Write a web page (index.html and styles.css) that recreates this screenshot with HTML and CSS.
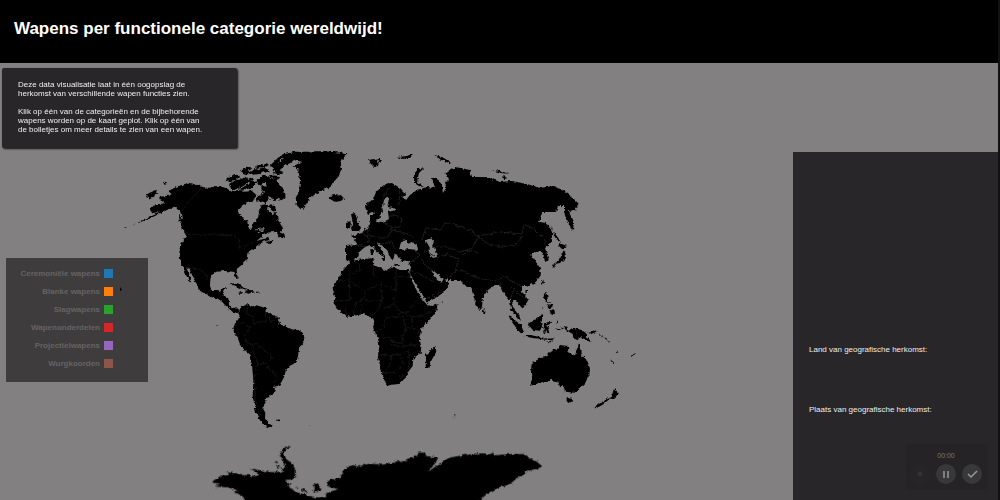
FILE: index.html
```html
<!DOCTYPE html>
<html lang="nl">
<head>
<meta charset="utf-8">
<title>Wapens per functionele categorie wereldwijd!</title>
<link rel="stylesheet" href="styles.css">
</head>
<body>
<header class="header"><h1>Wapens per functionele categorie wereldwijd!</h1></header>
<main class="main">
  <svg class="map" viewBox="0 63 793 437" role="img" aria-label="Wereldkaart">
    <defs>
      <filter id="coast" x="0" y="0" width="100%" height="100%">
        <feTurbulence type="fractalNoise" baseFrequency=".3" numOctaves="2" seed="4"/>
        <feDisplacementMap in="SourceGraphic" scale="4" xChannelSelector="R" yChannelSelector="G"/>
      </filter>
    </defs>
    <g filter="url(#coast)">
    <!-- North America -->
    <g transform="translate(110 145) scale(.33333)">
      <path d="M120 190L140 178 165 175 150 165 148 155 175 152 185 148 175 138 200 125 235 113 262 120 280 127 300 128 325 122 350 130 365 140 385 138 405 140 425 138 440 150 430 165 410 172 395 182 383 195 388 210 402 222 412 230 415 250 424 253 432 232 445 215 447 195 455 180 470 178 475 195 485 208 500 200 503 225 515 238 520 250 505 260 480 262 460 270 440 288 460 282 475 275 478 285 450 295 430 312 412 325 410 345 395 360 380 372 383 400 376 402 370 380 345 378 315 380 302 395 300 420 308 440 325 443 335 430 348 425 342 440 335 455 355 460 358 482 370 494 387 497 384 504 367 500 350 480 325 462 300 455 270 437 262 420 250 400 238 370 229 368 238 390 246 415 238 410 228 390 222 370 212 350 208 325 215 295 232 272 222 258 213 240 218 215 213 198 200 190 185 188 160 200 130 215 100 228 65 242 100 225 130 208 150 198 130 205Z"/>
      <path d="M107 153l10-9 24-10-3 9 8 3-15 7-12 11-3-8zM157 113l8-3 7 3-7 3zM40 248l12-2-6 3zM20 251l8-1zM207 210l6 4 2 12-6 4zM213 232l5 5-4 8zM220 258l16 8 0 8-8-3zM348 105l12-11 20-8 10 8-12 10-18 5-13 2zM357 120l20-15 18-2 10-8 12 8-8 12 11 7-18 14-20-5-15 5zM405 110l15-12 12 2-5 11 12-5 6 5-15 15-8 6-13-6zM392 78l15-10 17 2-8 9 13 5-18 4-10-3zM417 85l18-14 12 4 12-7 16 4 4 10-20-3-10 8-18 2zM435 65l17-9 6 5 12-6 10 4-20 8-20 5zM480 62L500 42 520 28 555 20 600 20 580 32 560 38 540 55 520 62 512 75 495 80 485 70zM487 83l22-7 12 6-17 6zM440 104l18-14 45 2 5 8-28-1-8 11-12 2-7 10-10-5zM460 100l20 2 20-7 5 18 12 14 6 12 4 16-12 11-15-6-4 10-13-13-17-7-13-10 2-20 15 5-3-12-10-14zM438 160l15-12 16 0 11 14-12 13-15-8-14 3zM473 180l22 3 3 14-10 3zM500 266l8-15 4 10 12 10-4 9-12-3zM467 292l20-6 5 3-15 8zM358 420l12-5 13 3 15 8 12 8-10-1-18-7-9-5zM402 437l20-2 8 6-18 4zM438 440l8 0 0 3-8 0zM385 439l9 2-4 2zM390 408l4 2z"/>
      <path d="M548 65L575 50 552 44 575 25 605 19 640 19 715 25 700 38 690 60 693 75 685 95 672 110 665 125 645 132 635 138 612 150 600 160 590 175 583 190 572 193 560 180 557 160 568 135 570 105 565 75ZM660 156l12-5 12 2 8-3 10 10-8 7-15 4-8-2-7-6z"/>
      <path class="line" d="M215 195L275 128M232 269L365 270 385 285 390 310 412 300 435 290M228 368L266 372 286 387 296 405"/>
      <path class="cut" d="M425 130l20-20M440 146l8-18 15 15M390 130l30-17M375 138l15-13M455 84l25 12M505 52l20-17M435 255l28-4-22 15"/>
    </g>
    <!-- South America -->
    <g transform="translate(210 290) scale(.33333)">
      <path d="M0 0L22 0 30 12 45 20 55 45 68 57 82 55 88 60 76 66 62 60 45 45 30 28 0 10ZM84 66L95 50 115 42 122 50 138 46 155 50 168 55 166 65 185 72 205 82 210 95 208 103 225 108 245 118 265 120 278 128 284 142 280 158 267 178 263 205 258 218 240 227 228 240 222 262 208 287 190 290 198 300 192 310 178 314 178 322 165 325 170 332 162 345 160 358 166 368 165 385 172 398 186 408 178 413 160 405 148 388 138 370 134 345 128 320 130 270 126 225 122 195 110 185 92 168 82 140 72 128 70 115 75 100 85 88 90 72ZM85 8l12-2 4 5-14 0zM106 4l12-4 10 2 6 5-20 4zM142 8l8 0-2 3zM198 389l11-1-3 6-6-1zM296 404l6 4-3 0zM19 104l5 2-3 2z"/>
      <path class="line" d="M115 48L108 70 130 80 131 102 150 94 168 94 166 65M78 104L98 98 120 112 105 135 107 155 128 165 138 160 160 178 183 195 183 210M128 162L130 185 143 220 133 265 137 330 150 385M143 222L168 220 183 245 195 248 203 265 190 282M178 77L180 94 205 90"/>
    </g>
    <!-- Europe and Asia -->
    <path d="M346 260L346 246 357 245 355 239 351 236 362 233 367 229 370 224 371 215 375 215 376 221 383 222 389 219 388 212 396 210 393 208 387 207 389 200 387 197 392 186 400 188 407 195 402 197 406 200 410 195 417 190 427 187 435 188 432 178 437 178 442 185 443 193 446 188 445 181 449 180 445 174 455 167 470 170 472 177 487 177 500 182 512 181 527 184 540 188 553 186 563 190 572 197 579 204 575 210 569 211 574 222 573 230 567 222 564 212 564 206 558 206 556 212 542 212 539 222 547 223 552 232 552 242 545 248 549 260 545 262 543 253 537 251 530 255 534 258 536 262 540 268 541 275 535 283 527 286 522 286 522 292 528 300 525 307 522 308 515 300 512 300 513 308 519 315 521 321 517 317 511 309 510 300 505 295 499 285 495 285 488 290 483 297 482 307 479 310 475 302 471 287 467 287 460 280 448 280 442 278 435 272 431 270 437 280 442 282 444 278 449 285 443 293 435 298 427 303 424 297 410 275 411 261 402 262 398 255 395 254 392 261 387 250 378 242 377 243 383 252 385 257 380 255 373 247 370 245 365 247 358 253 357 258 352 261Z"/>
    <path d="M365 207L367 203 373 200 376 192 385 184 392 183 400 188 392 194 387 197 382 205 383 212 378 219 375 220 373 212 368 214ZM351 227L354 221 358 222 358 228 352 230ZM351 214L355 213 357 219 361 228 359 231 351 231 355 227 353 223ZM346 224L349 221 351 223 350 227 346 228ZM330 196L335 195 342 196 342 199 336 202 330 199ZM368 160L374 159 379 162 378 166 374 167 371 164ZM376 159l6 0-2 3zM397 157l10-1 5-2-1 3-8 2zM434 155L442 157 452 163 449 163 440 159ZM414 183L414 174 418 169 424 168 419 173 417 182 424 187 419 186ZM492 170l9 1 8 3-8-1zM502 176l6 2-4 1zM552 182l3 1zM549 224L558 238 561 243 557 240ZM559 243L567 246 562 249 559 246ZM564 250L565 258 560 263 555 264 554 268 552 265 558 261ZM382 254l3 3 0 3-2-3zM380 258l5 0 0 3zM370 250l3-1 1 6-3 0zM393 264l7 0-1 2zM408 263l3-1-1 3z"/>
    <path class="sea" d="M399 249L402 241 407 240 408 244 414 242 418 248 417 250 409 249 403 250ZM426 240L431 238 434 242 432 246 436 250 437 257 433 258 429 254 430 248 426 241Z"/>
    <!-- Africa -->
    <g transform="translate(320 250) scale(.33333)">
      <path d="M93 33L125 28 160 25 163 45 172 50 200 62 208 52 225 54 240 60 268 60 270 80 285 112 295 130 308 150 318 165 335 168 353 163 350 180 330 208 305 238 298 260 304 290 302 308 280 325 278 348 265 365 255 385 238 402 215 404 203 407 195 395 183 355 173 320 178 290 176 270 160 235 163 210 150 202 135 192 100 197 80 200 60 185 40 158 45 140 38 115 55 85 70 60ZM347 287L349 305 335 330 328 354 317 354 318 315 332 303ZM366 332l4 2zM377 328l4 1zM364 157l6 0-5 3z"/>
      <path class="line" d="M50 93L88 92 88 75 120 60 115 35M88 92L135 123 185 100 160 75 162 45M88 95L90 150 45 153M135 123L133 145 110 155 100 195M185 102L228 122 228 60M228 80L275 80M225 122L220 160 235 180 275 200 310 198 340 180M183 105L187 150 170 185 152 200M133 150L187 152M75 160L80 198M125 155L125 192M190 175L220 165M235 190L270 185 275 165 290 150M197 202L250 200 258 240 245 260 250 280 215 275 210 262 180 262M197 202L190 235 165 245M258 235L290 235 300 255M275 200L278 232M215 265L218 285 240 290 270 285 300 285M173 315L215 315 240 315 265 300M215 315L208 350 190 370 230 365 250 340 240 315M265 300L268 330 265 355"/>
      <path class="line" d="M238 378l8-5 4 6-7 6z"/>
    </g>
    <!-- Borders across Eurasia -->
    <path class="line" d="M357 245L365 247M362 233L370 238 368 244M368 225L368 235 378 238 388 238 392 228 383 222M378 238L382 244 392 242 395 250M392 228L400 226 402 219 396 215 389 217M392 230L408 234 414 238M384 205L384 195 390 187M400 188L399 205M422 240L426 228 440 230 445 223 455 225 470 230 478 236 473 248 460 252 447 247 436 247M478 236L500 232 522 234 524 224 534 229 545 240 545 248M478 235L488 244 502 247 516 244 523 236M437 258L447 254 458 259 456 271 448 278M462 256L468 250 478 253M460 269L470 275 482 279 496 281 504 276 512 282 522 286M411 262L420 255 414 250M420 255L424 264 434 272M424 250L434 256M500 284L502 290M510 285L517 292 523 297M514 290L510 300M411 271L424 276 434 282M427 298L442 292"/>
    <!-- South-east Asia and Oceania -->
    <g transform="translate(460 250) scale(.33333)">
      <path d="M70 174l7 9-2 8-6-4zM197 120l8 0-4 9-5-3zM247 91l3-2 2 8-4 8-3-5zM143 196L153 198 168 213 183 225 192 248 182 250 170 235 155 215ZM190 255L210 255 245 262 260 266 285 265 275 271 245 268 205 262ZM205 220L220 213 235 203 243 192 250 198 244 212 248 225 240 242 220 240 210 235ZM252 128l7-2 3 15 2 12 10 3-2 3-13-5-8-10zM260 165l8 2 6-6 4 9-10 5zM268 185l12-8 6 8-6 8-8-4zM243 180l10-15-8 16zM252 220l22-5-4 7-12 5 10 7-3 4 3 12-7-2-2-10-4 14-5-2zM290 210l5 5-2 8zM283 235l20 3-5 3zM302 232l10 4-8 2zM308 228L322 230 325 243 340 233 365 240 378 250 382 262 395 276 380 272 365 262 352 270 340 265 338 252 318 240ZM383 248l18-3 6-8 2 8-15 7zM258 275l25-4-14 6zM415 250l15 8-6 1zM430 262l12 6-6 2zM442 270l8 10-6-5zM467 300l6 10-4-2zM470 315l4 4zM450 328l13 10-6 1zM513 317l12-8 2 2-12 8zM215 340L240 325 258 320 270 305 280 297 290 300 300 285 325 288 328 295 322 305 345 318 350 300 357 280 363 295 367 318 378 328 390 355 388 375 375 400 360 415 345 428 315 425 308 405 300 412 295 395 275 390 245 397 230 403 210 407 215 395 213 365ZM320 442l17 1-2 10-10 6-5-6zM464 410L469 422 477 430 460 447 450 446 457 432ZM445 444L448 448 428 464 405 476 401 472 420 460Z"/>
      <path class="line" d="M350 237l-1 30"/>
    </g>
    <!-- Antarctica -->
    <g transform="translate(200 410) scale(.33333)">
      <path d="M35 216L50 205 65 197 85 195 80 187 110 190 118 195 140 195 165 198 180 193 150 175 185 182 215 186 250 185 240 170 228 165 250 175 255 165 248 150 240 138 245 120 258 110 272 107 258 118 252 135 262 150 275 158 287 180 288 200 278 208 255 210 275 228 262 225 272 235 295 248 320 255 345 262 358 262 378 262 378 250 395 243 415 238 385 230 380 218 392 208 418 204 428 188 440 170 460 165 470 170 510 161 545 164 585 158 592 150 605 157 625 145 650 138 655 128 672 128 680 138 715 143 705 160 685 185 720 160 748 143 790 135 835 130 850 130 870 133 878 128 882 136 930 132 975 132 990 145 1010 155 1026 168 1015 176 985 182 950 205 930 222 890 235 860 252 830 280 140 280 125 255 100 247 112 242 85 232 45 230 62 222ZM288 228l8 3-3 4zM303 235l20 10-2 3-18-8zM343 220l10 3 12 14-8 8-15 1-2-12zM225 152l10 5-5 3zM227 165l12 3-4 6zM762 13l5 2-4 3z"/>
    </g>
    </g>
  </svg>

  <div class="sidebar">
    <section class="intro">
      <p>Deze data visualisatie laat in één oogopslag de herkomst van verschillende wapen functies zien.</p>
      <p>Klik op één van de categorieën en de bijbehorende wapens worden op de kaart geplot. Klik op één van de bolletjes om meer details te zien van een wapen.</p>
    </section>
    <div class="legend">
      <button class="category" type="button">Ceremoniële wapens<i class="swatch blue"></i></button>
      <button class="category" type="button">Blanke wapens<i class="swatch orange"></i></button>
      <button class="category" type="button">Slagwapens<i class="swatch green"></i></button>
      <button class="category" type="button">Wapenonderdelen<i class="swatch red"></i></button>
      <button class="category" type="button">Projectielwapens<i class="swatch purple"></i></button>
      <button class="category" type="button">Wurgkoorden<i class="swatch brown"></i></button>
      <svg class="pointer" viewBox="0 0 4 5" aria-hidden="true"><path d="M1 0l2 3-2 1z"/></svg>
    </div>
  </div>

  <aside class="details">
    <p>Land van geografische herkomst:</p>
    <p>Plaats van geografische herkomst:</p>
    <div class="recorder">
      <time class="time">00:00</time>
      <div class="controls">
        <button class="round faint" type="button" aria-label="Annuleren"><svg viewBox="0 0 20 20"><path d="M8 8l4 4M12 8l-4 4"/></svg></button>
        <button class="round" type="button" aria-label="Pauzeren"><svg viewBox="0 0 20 20"><path d="M8 7v7M12 7v7"/></svg></button>
        <button class="round" type="button" aria-label="Klaar"><svg viewBox="0 0 20 20"><path d="M6 10l3 3 6-6"/></svg></button>
      </div>
    </div>
  </aside>
</main>
</body>
</html>
```

FILE: styles.css
```css
* {
  box-sizing: border-box;
}

body {
  margin: 0;
  min-height: 100vh;
  display: flex;
  flex-direction: column;
  background: #828081;
  border-right: 2px solid #111;
  color: #eee;
  font: 8px/9px "Liberation Sans", Arial, sans-serif;
}

h1,
p {
  margin: 0;
}

.header {
  padding: 18px 14px 23px;
  background: #000;
}

h1 {
  color: #fff;
  font-size: 17px;
  line-height: 22px;
}

.main {
  flex: 1;
  display: grid;
  grid-template-columns: minmax(0, 1fr) 205px;
  overflow: hidden;
}

.map {
  grid-area: 1 / 1;
  width: 100%;
  display: block;
}

.line {
  fill: none;
  stroke: #1d1d1d;
  stroke-width: 2;
}

.map > g > .line {
  stroke-width: 1;
}

.sea {
  fill: #828081;
}

.cut {
  fill: none;
  stroke: #828081;
  stroke-width: 3;
}

.sidebar {
  grid-area: 1 / 1;
  position: relative;
  justify-self: start;
  display: flex;
  flex-direction: column;
  align-items: flex-start;
  gap: 110px;
  padding-top: 5px;
}

.intro {
  width: 235px;
  margin-left: 2px;
  padding: 12px 31px 14px 16px;
  display: grid;
  gap: 9px;
  background: #282629;
  border-radius: 2px;
  box-shadow: 1px 1px 2px #111;
}

.legend {
  position: relative;
  width: 142px;
  margin-left: 6px;
  padding: 6px 35px 10px 0;
  background: #3e3c3d;
}

.category {
  width: 100%;
  height: 18px;
  padding: 0;
  display: flex;
  align-items: center;
  justify-content: flex-end;
  gap: 4px;
  border: 0;
  background: none;
  color: #656364;
  font: bold 8px/9px "Liberation Sans", Arial, sans-serif;
}

.swatch {
  width: 9px;
  height: 9px;
}

.blue { background: #1f77b4; }
.orange { background: #ff7f0e; }
.green { background: #2ca02c; }
.red { background: #d62728; }
.purple { background: #9467bd; }
.brown { background: #8c564b; }

.pointer {
  position: absolute;
  left: 113px;
  top: 29px;
  width: 4px;
}

.details {
  margin-top: 89px;
  padding: 193px 10px 11px 16px;
  display: flex;
  flex-direction: column;
  background: #282629;
}

.details p + p {
  margin-top: 51px;
}

.recorder {
  margin-top: auto;
  align-self: flex-end;
  width: 82px;
  padding: 7px 6px 5px 4px;
  background: #252326;
  color: #777;
  font-size: 7px;
  text-align: center;
}

.time {
  display: block;
}

.controls {
  margin-top: 4px;
  display: flex;
  justify-content: space-between;
}

.round {
  width: 20px;
  height: 20px;
  padding: 0;
  border: 0;
  border-radius: 50%;
  background: #383739;
  color: #999;
}

.round svg {
  display: block;
  fill: none;
  stroke: currentColor;
  stroke-width: 1.5;
}

.faint {
  background: #272528;
  color: #39373a;
}
```
